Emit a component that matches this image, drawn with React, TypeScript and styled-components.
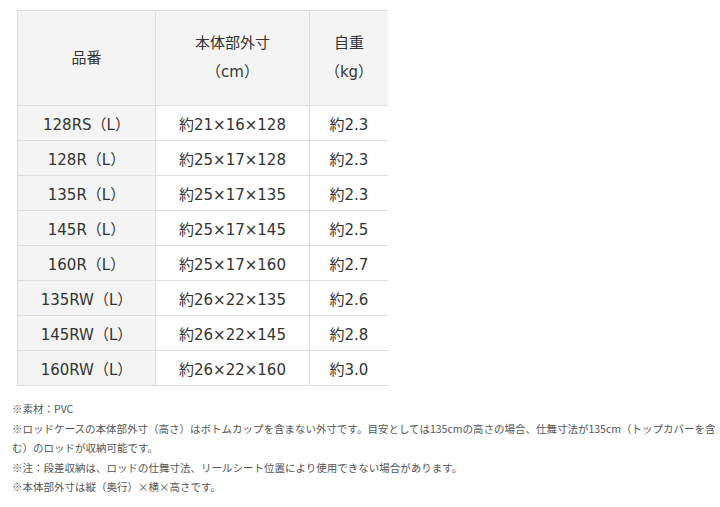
import React from 'react';
import styled, { createGlobalStyle } from 'styled-components';

const Global = createGlobalStyle`
    body {
        margin: 0;
        background-color: #ffffff;
        font-family: "Noto Sans CJK JP", "Noto Sans", sans-serif;
        color: #333333;
    }
`;

const Page = styled.div`
    padding: 10px 0 0 12px;
`;

const TableWrap = styled.div`
    width: 371px;
    margin-left: 5px;
    overflow: hidden;
`;

const Table = styled.table`
    border-collapse: collapse;
    table-layout: fixed;
    width: 460px;
    font-family: "DejaVu Sans", "Noto Sans CJK JP", sans-serif;
    font-size: 15px;
`;

const Th = styled.th<{ w: number }>`
    width: ${(p) => p.w}px;
    height: 94px;
    padding: 0;
    border: 1px solid #dddddd;
    background-color: #f4f4f4;
    font-weight: normal;
    line-height: 29px;
    text-align: center;
`;

const Td = styled.td<{ head?: boolean }>`
    height: 34px;
    padding: 0;
    border: 1px solid #dddddd;
    background-color: ${(p) => (p.head ? '#f4f4f4' : '#ffffff')};
    text-align: center;
    white-space: nowrap;
`;

const Notes = styled.div`
    margin-top: 13px;
    width: 704px;
    font-size: 10.5px;
    line-height: 19.6px;
    color: #555555;
`;

const rows = [
    ['128RS（L）', '約21×16×128', '約2.3'],
    ['128R（L）', '約25×17×128', '約2.3'],
    ['135R（L）', '約25×17×135', '約2.3'],
    ['145R（L）', '約25×17×145', '約2.5'],
    ['160R（L）', '約25×17×160', '約2.7'],
    ['135RW（L）', '約26×22×135', '約2.6'],
    ['145RW（L）', '約26×22×145', '約2.8'],
    ['160RW（L）', '約26×22×160', '約3.0'],
];

export default function App() {
    return (
        <Page>
            <Global />
            <TableWrap>
                <Table>
                    <thead>
                        <tr>
                            <Th w={137}>品番</Th>
                            <Th w={153}>本体部外寸<br />（cm）</Th>
                            <Th w={78}>自重<br />（kg）</Th>
                            <Th w={92}>&nbsp;</Th>
                        </tr>
                    </thead>
                    <tbody>
                        {rows.map((r) => (
                            <tr key={r[0]}>
                                <Td head>{r[0]}</Td>
                                <Td>{r[1]}</Td>
                                <Td>{r[2]}</Td>
                                <Td>&nbsp;</Td>
                            </tr>
                        ))}
                    </tbody>
                </Table>
            </TableWrap>
            <Notes>
                <div>※素材：PVC</div>
                <div>※ロッドケースの本体部外寸（高さ）はボトムカップを含まない外寸です。目安としては135cmの高さの場合、仕舞寸法が135cm（トップカバーを含む）のロッドが収納可能です。</div>
                <div>※注：段差収納は、ロッドの仕舞寸法、リールシート位置により使用できない場合があります。</div>
                <div>※本体部外寸は縦（奥行）×横×高さです。</div>
            </Notes>
        </Page>
    );
}
